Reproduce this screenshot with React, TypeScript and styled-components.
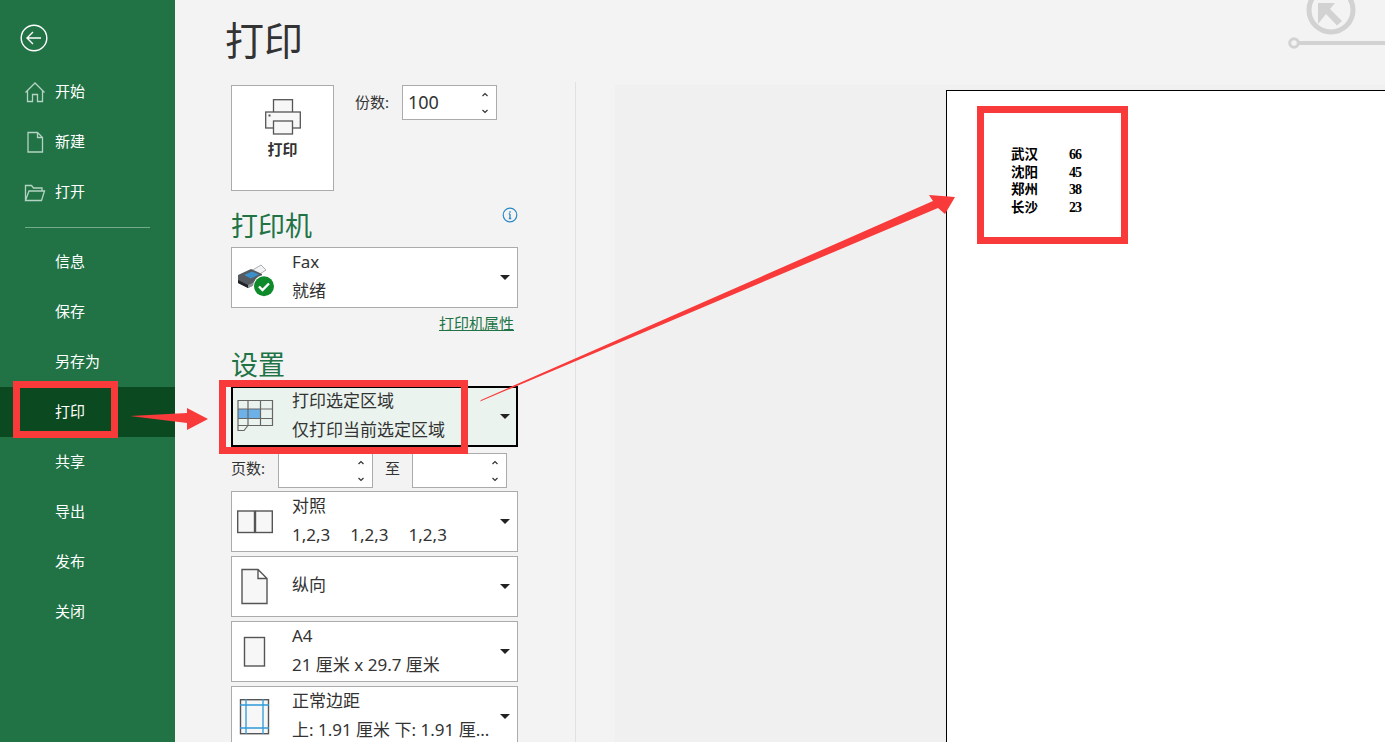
import React from "react";
import styled, { createGlobalStyle } from "styled-components";

const FONT = `"Noto Sans", "Noto Sans CJK SC", sans-serif`;
const GREEN = "#217346";
const RED = "#f93a3a";

const GlobalStyle = createGlobalStyle`
  html, body {
    margin: 0;
    padding: 0;
    background: #f3f3f3;
    font-family: ${FONT};
    color: #333;
  }
  * {
    box-sizing: border-box;
  }
`;

const Page = styled.div`
  position: relative;
  display: flex;
  width: 1385px;
  height: 742px;
  overflow: hidden;
`;

const Sidebar = styled.nav`
  width: 175px;
  flex: none;
  background: ${GREEN};
  color: #fff;
  padding-top: 24px;
`;

const BackButton = styled.div`
  height: 43px;
  padding-left: 20px;
`;

const NavItem = styled.div<{ $active?: boolean }>`
  display: flex;
  align-items: center;
  height: 50px;
  padding: 0 0 4px 55px;
  position: relative;
  font-size: 15px;
  background: ${(p) => (p.$active ? "#0b4a20" : "transparent")};
`;

const NavIcon = styled.svg`
  position: absolute;
  left: 23px;
  top: 13px;
  width: 24px;
  height: 24px;
  fill: none;
  stroke: #b5d3c2;
  stroke-width: 1.3;
`;

const NavDivider = styled.div`
  height: 1px;
  margin: 10px 25px 9px;
  background: #74ab8d;
`;

const Main = styled.main`
  flex: 1;
  display: flex;
  flex-direction: column;
  min-width: 0;
`;

const Header = styled.header`
  height: 85px;
  flex: none;
  padding-left: 50px;
`;

const PageTitle = styled.h1`
  margin: 0;
  font-size: 39px;
  line-height: 80px;
  font-weight: 400;
  color: #333;
`;

const Watermark = styled.svg`
  position: absolute;
  top: 0;
  right: 0;
  width: 100px;
  height: 60px;
`;

const Body = styled.div`
  flex: 1;
  display: flex;
  min-height: 0;
`;

const SettingsColumn = styled.section`
  width: 401px;
  flex: none;
  padding-left: 56px;
  padding-right: 57px;
  border-right: 1px solid #e1e1e1;
  margin-top: -3px;
  padding-top: 3px;
`;

const PrintRow = styled.div`
  display: flex;
`;

const PrintButton = styled.div`
  width: 103px;
  height: 106px;
  background: #fff;
  border: 1px solid #ababab;
  display: flex;
  flex-direction: column;
  align-items: center;
  padding-top: 13px;
  font-size: 15px;
  font-weight: 700;
  line-height: 22px;
  svg {
    margin-bottom: 3px;
  }
`;

const CopiesGroup = styled.div`
  display: flex;
  align-items: flex-start;
  margin-left: 21px;
`;

const FieldLabel = styled.span`
  font-size: 15px;
  line-height: 34px;
`;

const CopiesLabel = styled(FieldLabel)`
  width: 47px;
`;

const NumberInput = styled.div`
  position: relative;
  width: 95px;
  height: 35px;
  background: #fff;
  border: 1px solid #ababab;
  padding-left: 5px;
  font-size: 18px;
  line-height: 33px;
`;

const Spin = styled.svg`
  position: absolute;
  right: 5px;
  top: 2px;
  width: 12px;
  height: 30px;
  fill: none;
  stroke: #333;
  stroke-width: 1.2;
`;

const HeadingRow = styled.div`
  display: flex;
  justify-content: space-between;
  margin-top: 17px;
`;

const SectionHeading = styled.h2`
  margin: 0 0 3px;
  font-size: 27px;
  line-height: 36px;
  font-weight: 400;
  color: ${GREEN};
`;

const InfoIcon = styled.svg`
  width: 16px;
  height: 16px;
  margin-top: -1px;
  fill: none;
  stroke: #2b88c5;
`;

const LinkRow = styled.div`
  height: 39px;
  padding-right: 4px;
  text-align: right;
  font-size: 15px;
  line-height: 30px;
  color: ${GREEN};
  text-decoration: underline;
`;

const Dropdown = styled.div<{ $selected?: boolean }>`
  position: relative;
  display: flex;
  align-items: center;
  height: 61px;
  flex: none;
  background: ${(p) => (p.$selected ? "#eaf3ee" : "#fff")};
  border: ${(p) => (p.$selected ? "2px solid #000" : "1px solid #ababab")};
  padding-left: ${(p) => (p.$selected ? "4px" : "5px")};
`;

const DropIcon = styled.svg`
  width: 36px;
  height: 36px;
  flex: none;
  overflow: visible;
  margin-right: 19px;
`;

const DropText = styled.div`
  font-size: 17px;
  line-height: 29px;
  white-space: nowrap;
  color: #333;
  padding-bottom: 4px;
`;

const PageOrder = styled.span`
  display: inline-block;
  margin-right: 20px;
`;

const Caret = styled.span<{ $selected?: boolean }>`
  position: absolute;
  right: ${(p) => (p.$selected ? "6px" : "7px")};
  top: ${(p) => (p.$selected ? "26px" : "27px")};
  width: 0;
  height: 0;
  border-left: 5px solid transparent;
  border-right: 5px solid transparent;
  border-top: 5px solid #222;
`;

const RangeRow = styled.div`
  display: flex;
  height: 34px;
  margin: 6px 0 4px;
`;

const RangeLabel = styled(FieldLabel)`
  width: 47px;
  line-height: 30px;
`;

const RangeTo = styled(FieldLabel)`
  width: 39px;
  text-align: center;
  line-height: 30px;
`;

const DropdownStack = styled.div`
  display: flex;
  flex-direction: column;
  gap: 4px;
`;

const Preview = styled.section`
  flex: 1;
  min-width: 0;
  margin-left: 39px;
  padding: 5px 0 0 331px;
  background: #f0f0f0;
`;

const Sheet = styled.div`
  height: 100%;
  background: #fff;
  border-left: 1px solid #000;
  border-top: 1px solid #000;
  padding: 55px 0 0 64px;
`;

const SheetTable = styled.div`
  display: grid;
  grid-template-columns: 58px 30px;
  grid-auto-rows: 17.7px;
  font-family: "Liberation Serif", "Noto Sans CJK SC", serif;
  font-size: 13.5px;
  line-height: 17.7px;
  font-weight: 700;
  color: #000;
`;

const SheetNumber = styled.span`
  font-size: 14px;
  letter-spacing: -1px;
`;

const Annotations = styled.svg`
  position: absolute;
  inset: 0;
  width: 100%;
  height: 100%;
  pointer-events: none;
`;

const NAV_TOP = ["开始", "新建", "打开"];
const NAV_BOTTOM = ["信息", "保存", "另存为", "打印", "共享", "导出", "发布", "关闭"];

const NAV_PATHS: Record<string, React.ReactNode> = {
  开始: <path d="M2.5 12.5 12 3l9.5 9.5M4.5 11v10.5h5V14.500h5v7h5V11" />,
  新建: <path d="M5 2.500h9.500l5 5v14.500H5zM14.500 2.500v5h5" />,
  打开: <path d="M2.500 20.500v-15h6l2 2.500h8.500v3M2.500 20.500h16l3-9.500H6l-3.500 9.500z" />,
};

const SHEET_ROWS: [string, string][] = [
  ["武汉", "66"],
  ["沈阳", "45"],
  ["郑州", "38"],
  ["长沙", "23"],
];

const Spinner = () => (
  <Spin viewBox="0 0 12 30">
    <path d="M3.500 8 6 5.500 8.500 8M3.500 22 6 24.500 8.500 22" />
  </Spin>
);

const BackIcon = () => (
  <svg width="28" height="28" viewBox="0 0 28 28" fill="none" stroke="#fff">
    <circle cx="14" cy="14" r="12.800" strokeWidth="1.400" />
    <path d="M21 14H7.500M13 8l-6 6 6 6" strokeWidth="1.400" />
  </svg>
);

const PrinterIcon = () => (
  <svg width="36" height="36" viewBox="0 0 36 36" fill="#f7f7f7" stroke="#555" strokeWidth="1.300">
    <rect x="8.500" y="0.700" width="19" height="13" />
    <rect x="0.700" y="13" width="34.600" height="16" />
    <rect x="8.500" y="22" width="19" height="13" />
    <rect x="3.500" y="15.500" width="2" height="2" fill="#555" stroke="none" />
  </svg>
);

const FaxIcon = () => (
  <DropIcon viewBox="0 0 36 36">
    <path d="M14 11l10-6 5 5-9 6z" fill="#f1f3f5" stroke="#8a8f94" strokeWidth="0.700" />
    <path d="M1 15l13-6 11 5-1 8-13 6-10-5z" fill="#565b61" />
    <path d="M7 15l8-3.500 7 3-8 4z" fill="#3b8fc9" />
    <path d="M1 20l10 5v3L1 23z" fill="#1f2327" />
    <path d="M11 25l13-6v3l-13 6z" fill="#8b9096" />
    <circle cx="27" cy="26.200" r="11" fill="#fff" />
    <circle cx="27" cy="26.200" r="10" fill="#0f8a2a" />
    <path d="M22 26.500l3.500 3.500 6.500-6.500" fill="none" stroke="#fff" strokeWidth="2.400" />
  </DropIcon>
);

const SelectionIcon = () => (
  <DropIcon viewBox="0 0 36 36" fill="none" stroke="#666" strokeWidth="1.200">
    <rect x="1" y="10" width="22.500" height="9.500" fill="#6cb1e8" stroke="none" />
    <path d="M1 1.500h34.500v25H1zM1 10h34.500M1 19.500h34.500M11 1.500v25M23.500 1.500v25M1 26.500v5h6l4-5" />
  </DropIcon>
);

const CollateIcon = () => (
  <DropIcon viewBox="0 0 36 36" fill="#f7f7f7" stroke="#555" strokeWidth="1.400">
    <rect x="0.700" y="7" width="16.800" height="21.500" />
    <rect x="18.500" y="7" width="16.800" height="21.500" />
  </DropIcon>
);

const PortraitIcon = () => (
  <DropIcon viewBox="0 0 36 36" fill="#f7f7f7" stroke="#555" strokeWidth="1.400">
    <path d="M5 0.500h16l9 9v25H5zM21 0.500v9h9" />
  </DropIcon>
);

const PaperIcon = () => (
  <DropIcon viewBox="0 0 36 36" fill="#f7f7f7" stroke="#555" strokeWidth="1.400">
    <rect x="7.500" y="3.500" width="20" height="28.500" />
  </DropIcon>
);

const MarginsIcon = () => (
  <DropIcon viewBox="0 0 36 36" fill="#f7f7f7">
    <rect x="3.500" y="0.700" width="28" height="34" stroke="#555" strokeWidth="1.400" />
    <path d="M9 0v35M26 0v35M3 6h29M3 29h29" stroke="#2f9bd8" strokeWidth="1.300" fill="none" />
  </DropIcon>
);

export default function App() {
  return (
    <Page>
      <GlobalStyle />
      <Sidebar>
        <BackButton>
          <BackIcon />
        </BackButton>
        {NAV_TOP.map((label) => (
          <NavItem key={label}>
            <NavIcon viewBox="0 0 24 24">{NAV_PATHS[label]}</NavIcon>
            {label}
          </NavItem>
        ))}
        <NavDivider />
        {NAV_BOTTOM.map((label) => (
          <NavItem key={label} $active={label === "打印"}>
            {label}
          </NavItem>
        ))}
      </Sidebar>

      <Main>
        <Header>
          <PageTitle>打印</PageTitle>
        </Header>
        <Watermark viewBox="0 0 100 60" fill="none" stroke="#d2d2d2">
          <circle cx="46" cy="10" r="22" strokeWidth="5" />
          <path d="M33 3h17l-5 6 12 12-5 4.500-11-11.500-8 10z" fill="#d2d2d2" stroke="none" />
          <circle cx="9" cy="43" r="4.300" strokeWidth="3" />
          <path d="M13 43h87" strokeWidth="4" />
        </Watermark>
        <Body>
          <SettingsColumn>
            <PrintRow>
              <PrintButton>
                <PrinterIcon />
                打印
              </PrintButton>
              <CopiesGroup>
                <CopiesLabel>份数:</CopiesLabel>
                <NumberInput>
                  100
                  <Spinner />
                </NumberInput>
              </CopiesGroup>
            </PrintRow>

            <HeadingRow>
              <SectionHeading>打印机</SectionHeading>
              <InfoIcon viewBox="0 0 16 16">
                <circle cx="8" cy="8" r="6.800" strokeWidth="1.200" />
                <path d="M8 7v4.500M6.800 7H8M6.800 11.500h2.400" strokeWidth="1.300" />
                <path d="M7.300 4.300h1.400v1.400H7.300z" fill="#2b88c5" stroke="none" />
              </InfoIcon>
            </HeadingRow>
            <Dropdown>
              <FaxIcon />
              <DropText>
                Fax
                <br />
                就绪
              </DropText>
              <Caret />
            </Dropdown>
            <LinkRow>打印机属性</LinkRow>

            <SectionHeading>设置</SectionHeading>
            <Dropdown $selected>
              <SelectionIcon />
              <DropText>
                打印选定区域
                <br />
                仅打印当前选定区域
              </DropText>
              <Caret $selected />
            </Dropdown>
            <RangeRow>
              <RangeLabel>页数:</RangeLabel>
              <NumberInput>
                <Spinner />
              </NumberInput>
              <RangeTo>至</RangeTo>
              <NumberInput>
                <Spinner />
              </NumberInput>
            </RangeRow>
            <DropdownStack>
              <Dropdown>
                <CollateIcon />
                <DropText>
                  对照
                  <br />
                  <PageOrder>1,2,3</PageOrder>
                  <PageOrder>1,2,3</PageOrder>
                  <PageOrder>1,2,3</PageOrder>
                </DropText>
                <Caret />
              </Dropdown>
              <Dropdown>
                <PortraitIcon />
                <DropText>纵向</DropText>
                <Caret />
              </Dropdown>
              <Dropdown>
                <PaperIcon />
                <DropText>
                  A4
                  <br />
                  21 厘米 x 29.7 厘米
                </DropText>
                <Caret />
              </Dropdown>
              <Dropdown>
                <MarginsIcon />
                <DropText>
                  正常边距
                  <br />
                  上: 1.91 厘米 下: 1.91 厘...
                </DropText>
                <Caret />
              </Dropdown>
            </DropdownStack>
          </SettingsColumn>

          <Preview>
            <Sheet>
              <SheetTable>
                {SHEET_ROWS.map(([city, value]) => (
                  <React.Fragment key={city}>
                    <span>{city}</span>
                    <SheetNumber>{value}</SheetNumber>
                  </React.Fragment>
                ))}
              </SheetTable>
            </Sheet>
          </Preview>
        </Body>
      </Main>

      <Annotations viewBox="0 0 1385 742" fill="none" stroke={RED} strokeWidth="7">
        <rect x="16.500" y="384.500" width="98" height="50" />
        <rect x="222.500" y="383.500" width="242" height="67" />
        <rect x="980.500" y="109.500" width="144" height="131" />
        <polygon points="130,416 187,413 187,408 208,419 187,430 187,423" fill={RED} stroke="none" />
        <polygon points="480,401.500 481,400 933,201 929,195 955,197 945,214 938,208" fill={RED} stroke="none" />
      </Annotations>
    </Page>
  );
}
